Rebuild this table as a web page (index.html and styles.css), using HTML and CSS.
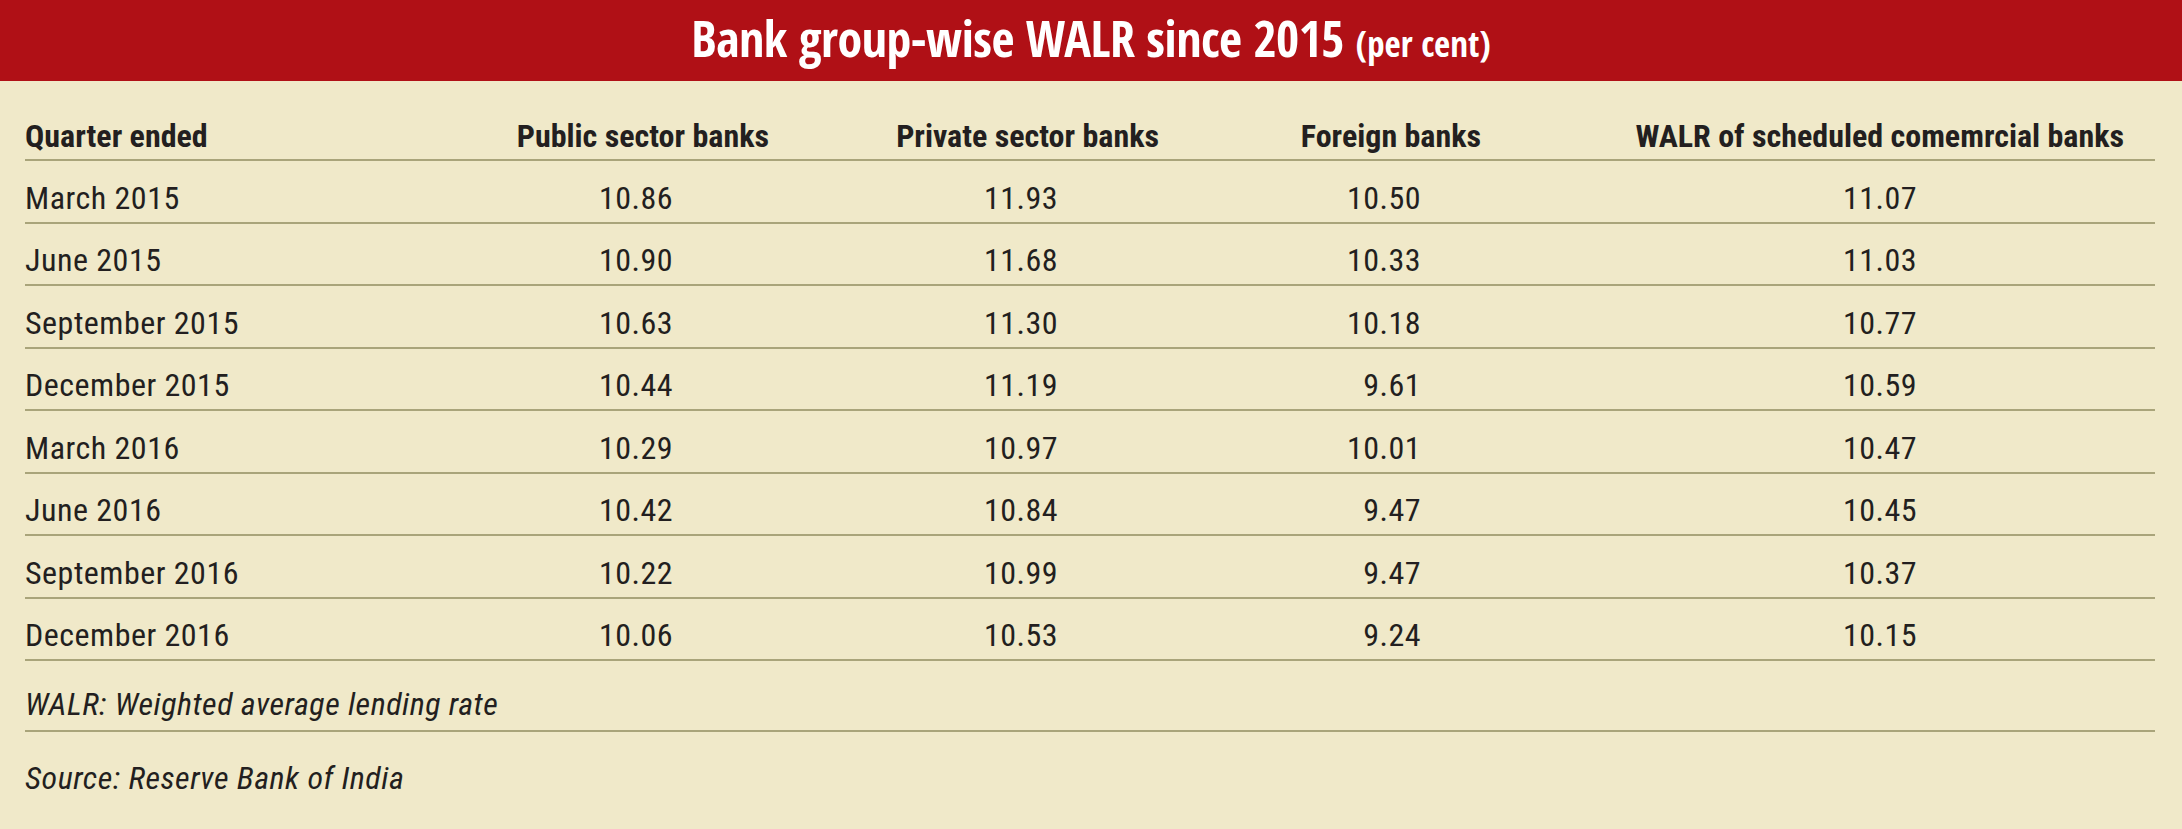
FILE: index.html
```html
<!DOCTYPE html>
<html lang="en">
<head>
<meta charset="utf-8">
<title>Bank group-wise WALR since 2015</title>
<link rel="stylesheet" href="styles.css">
</head>
<body>
<div class="card">
  <header class="banner">
    <h1 class="title">Bank group-wise WALR since 2015 <span class="unit">(per cent)</span></h1>
  </header>
  <div class="table">
    <div class="row head">
      <div class="cell c1">Quarter ended</div>
      <div class="cell c2">Public sector banks</div>
      <div class="cell c3">Private sector banks</div>
      <div class="cell c4">Foreign banks</div>
      <div class="cell c5">WALR of scheduled comemrcial banks</div>
    </div>
    <div class="row"><div class="cell c1">March 2015</div><div class="cell c2">10.86</div><div class="cell c3">11.93</div><div class="cell c4">10.50</div><div class="cell c5">11.07</div></div>
    <div class="row"><div class="cell c1">June 2015</div><div class="cell c2">10.90</div><div class="cell c3">11.68</div><div class="cell c4">10.33</div><div class="cell c5">11.03</div></div>
    <div class="row"><div class="cell c1">September 2015</div><div class="cell c2">10.63</div><div class="cell c3">11.30</div><div class="cell c4">10.18</div><div class="cell c5">10.77</div></div>
    <div class="row"><div class="cell c1">December 2015</div><div class="cell c2">10.44</div><div class="cell c3">11.19</div><div class="cell c4">9.61</div><div class="cell c5">10.59</div></div>
    <div class="row"><div class="cell c1">March 2016</div><div class="cell c2">10.29</div><div class="cell c3">10.97</div><div class="cell c4">10.01</div><div class="cell c5">10.47</div></div>
    <div class="row"><div class="cell c1">June 2016</div><div class="cell c2">10.42</div><div class="cell c3">10.84</div><div class="cell c4">9.47</div><div class="cell c5">10.45</div></div>
    <div class="row"><div class="cell c1">September 2016</div><div class="cell c2">10.22</div><div class="cell c3">10.99</div><div class="cell c4">9.47</div><div class="cell c5">10.37</div></div>
    <div class="row"><div class="cell c1">December 2016</div><div class="cell c2">10.06</div><div class="cell c3">10.53</div><div class="cell c4">9.24</div><div class="cell c5">10.15</div></div>
    <p class="note">WALR: Weighted average lending rate</p>
    <p class="source">Source: Reserve Bank of India</p>
  </div>
</div>
</body>
</html>
```
FILE: styles.css
```css
html, body {
  margin: 0;
  padding: 0;
  background: #f0e9c9;
}

.card {
  width: 2182px;
  height: 829px;
  background: #f0e9c9;
  color: #231f20;
  font-family: Roboto, "Liberation Sans", Arial, sans-serif;
  font-stretch: 75%;
  font-size: 32px;
  overflow: hidden;
}

.banner {
  height: 81px;
  background: #b01016;
  display: flex;
  align-items: center;
  justify-content: center;
}

.title {
  margin: 0;
  color: #ffffff;
  font-family: "Open Sans Condensed", "Open Sans", sans-serif;
  font-stretch: 75%;
  font-weight: 700;
  font-size: 50px;
  line-height: 60px;
  letter-spacing: -0.5px;
  white-space: nowrap;
}

.unit {
  font-size: 35px;
  font-weight: 600;
  letter-spacing: 0;
}

.table {
  padding: 0 27px 0 25px;
}

.row {
  display: grid;
  grid-template-columns: 475px 269px 390px 322px 674px;
  line-height: 40px;
  padding: 16.5px 0 4px;
  border-bottom: 2px solid #a9a47a;
  letter-spacing: 0.5px;
}

.row.head {
  padding: 35px 0 3px;
  font-weight: 700;
  letter-spacing: 0;
}

.cell {
  white-space: nowrap;
}

.c1 {
  text-align: left;
}

.c2, .c3, .c4, .c5 {
  text-align: right;
}

.row .c2 { padding-right: 96px; }
.row .c3 { padding-right: 101px; }
.row .c4 { padding-right: 60px; }
.row .c5 { padding-right: 238px; }

.row.head .c2,
.row.head .c3,
.row.head .c4 { padding-right: 0; }
.row.head .c5 { padding-right: 31px; }

.note,
.source {
  margin: 0;
  font-style: italic;
  line-height: 40px;
  letter-spacing: 0.5px;
}

.note {
  padding: 23px 0 6px;
  border-bottom: 2px solid #a9a47a;
}

.source {
  padding: 26px 0 0;
}
```
